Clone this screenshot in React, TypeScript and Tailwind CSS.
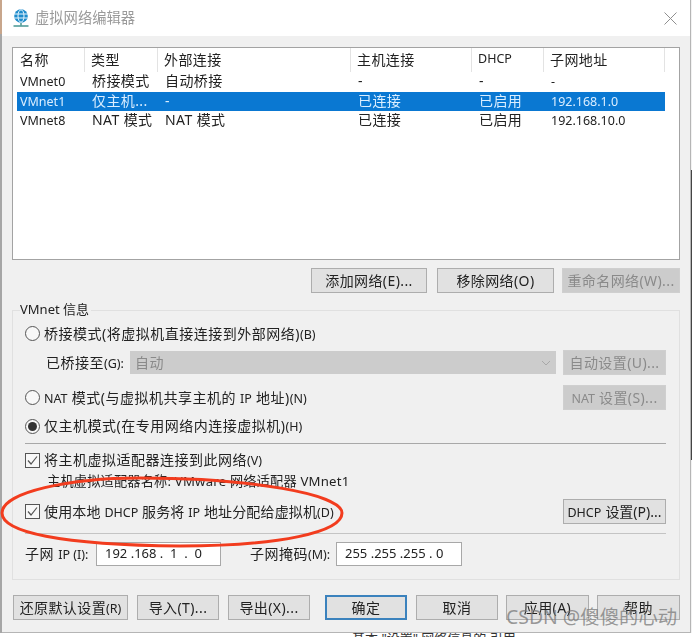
import * as React from "react";

const FONT = "font-['Noto_Sans','Noto_Sans_CJK_SC',sans-serif]";

// 表头和数据行共用的列宽
const GRID = "grid w-[648px] grid-cols-[68px_73px_193px_121px_72px_121px]";

const rows = [
  ["VMnet0", "桥接模式", "自动桥接", "-", "-", "-"],
  ["VMnet1", "仅主机...", "-", "已连接", "已启用", "192.168.1.0"],
  ["VMnet8", "NAT 模式", "NAT 模式", "已连接", "已启用", "192.168.10.0"],
];

const Small = ({ children }: { children: React.ReactNode }) => (
  <span className="text-[12.5px] tracking-normal">{children}</span>
);

const Btn = ({
  children,
  disabled,
  primary,
  className = "",
}: {
  children: React.ReactNode;
  disabled?: boolean;
  primary?: boolean;
  className?: string;
}) => {
  let look = "border border-[#adadad] bg-[#e1e1e1] text-[#222]";
  if (disabled) look = "border border-[#cfcfcf] bg-[#cccccc] text-[#8a8a8a]";
  if (primary) look = "border-2 border-[#3b82bd] bg-[#e1e1e1] text-[#222]";
  return (
    <div
      className={`flex h-[25px] items-center justify-center whitespace-nowrap text-[14px] tracking-[0.4px] ${look} ${className}`}
    >
      <span>{children}</span>
    </div>
  );
};

const Radio = ({ checked }: { checked?: boolean }) => (
  <div className="mr-1 flex h-[15px] w-[15px] shrink-0 items-center justify-center rounded-full border border-[#555] bg-[#f8f8f8]">
    {checked && <div className="h-[9px] w-[9px] rounded-full bg-[#333]" />}
  </div>
);

const Check = () => (
  <div className="mr-1 flex h-[15px] w-[15px] shrink-0 items-center justify-center border border-[#555] bg-[#f8f8f8]">
    <svg width="11" height="11" viewBox="0 0 11 11" fill="none" stroke="#555" strokeWidth="1.2">
      <path d="M1 5.5 L4 9 L10 1.5" />
    </svg>
  </div>
);

const NetIcon = () => (
  <svg width="16" height="18" viewBox="0 0 16 18" fill="none" className="mr-[6px]">
    <circle cx="8" cy="7" r="6.8" fill="#1f8ccb" />
    <ellipse cx="8" cy="7" rx="3" ry="6.2" stroke="#e8f6ff" strokeWidth="1" />
    <path d="M1.4 5H14.6M1.4 9H14.6" stroke="#e8f6ff" strokeWidth="1" />
    <path d="M8 14V16.5" stroke="#3a8f8a" strokeWidth="1.4" />
    <path d="M0.5 17H15.5" stroke="#3a8f8a" strokeWidth="1.4" />
  </svg>
);

const IpField = ({ children, className = "" }: { children: React.ReactNode; className?: string }) => (
  <div
    className={`flex h-[24px] items-center whitespace-pre border border-[#a8a8a8] bg-white pl-2 text-[13px] tracking-normal text-[#222] ${className}`}
  >
    {children}
  </div>
);

const App = () => {
  return (
    <div className={`relative flex h-[637px] w-[692px] flex-col overflow-hidden bg-white ${FONT}`}>
      <div className="flex h-[633px] blur-[0.45px]">
        <div className="flex w-[2px] flex-col">
          <div className="h-[34px] bg-[#c8a68c]" />
          <div className="flex-1 bg-[#a6a6a6]" />
        </div>
        <div className="flex min-w-0 flex-1 flex-col border-b border-[#b5b5b5]">
          {/* 标题栏 */}
          <div className="flex h-[36px] shrink-0 items-center bg-white pl-[11px] pr-[13px]">
            <NetIcon />
            <span className="text-[14.3px] text-[#9a9a9a]">虚拟网络编辑器</span>
            <svg width="13" height="13" viewBox="0 0 13 13" className="ml-auto" stroke="#8f8f8f" strokeWidth="1">
              <path d="M0.5 0.5L12.5 12.5M12.5 0.5L0.5 12.5" />
            </svg>
          </div>

          <div className="flex flex-1 flex-col bg-[#f0f0f0] pl-[10px] pr-[10px] pt-[11px] text-[#222]">
            {/* 网络列表 */}
            <div className="h-[213px] shrink-0 border border-[#a3a3a3] bg-white pl-[4px]">
              <div className={`${GRID} h-[24px] items-center text-[14px] tracking-[0.4px]`}>
                {["名称", "类型", "外部连接", "主机连接", "DHCP", "子网地址"].map((h, i) => (
                  <div
                    key={h}
                    className={`flex h-full items-center border-r border-[#e3e3e3] pb-[2px] ${i === 0 ? "pl-[3px]" : "pl-[6px]"}`}
                  >
                    {h === "DHCP" ? <Small>{h}</Small> : h}
                  </div>
                ))}
              </div>
              {rows.map((r) => (
                <div
                  key={r[0]}
                  className={`${GRID} h-[19.5px] items-start text-[14px] leading-[17px] tracking-[0.4px] ${
                    r[0] === "VMnet1" ? "bg-[#0a78d2] text-[#dbeeff]" : "text-[#222]"
                  }`}
                >
                  {r.map((c, i) => (
                    <div key={i} className={`whitespace-nowrap ${i === 0 ? "pl-[3px]" : "pl-[7px]"}`}>
                      {i === 0 || i === 5 ? <Small>{c}</Small> : c}
                    </div>
                  ))}
                </div>
              ))}
            </div>

            {/* 列表操作 */}
            <div className="mt-[8px] flex shrink-0 justify-end">
              <Btn className="w-[116px]">添加网络(E)...</Btn>
              <Btn className="ml-[10px] w-[117px]">移除网络(O)</Btn>
              <Btn disabled className="ml-[8px] w-[118px]">重命名网络(W)...</Btn>
            </div>

            {/* VMnet 信息 */}
            <div className="relative mt-[17px] flex h-[270px] shrink-0 flex-col border border-[#e0e0e0] pl-[12px] pr-[13px] text-[14px] tracking-[0.5px]">
              <div className="absolute -top-[10px] left-[7px] bg-[#f0f0f0] pr-[2px] text-[13px] leading-[16px] tracking-normal">
                VMnet 信息
              </div>

              <div className="mt-[11px] flex h-[23px] items-center">
                <Radio />
                <span>桥接模式(将虚拟机直接连接到外部网络)<Small>(B)</Small></span>
              </div>

              <div className="mt-[5px] flex h-[25px] items-center pl-[21px]">
                <span className="w-[84px] shrink-0 whitespace-nowrap">已桥接至<Small>(G):</Small></span>
                <div className="flex h-[23px] flex-1 items-center justify-between bg-[#cccccc] pl-[5px] pr-[5px] text-[#8a8a8a]">
                  自动
                  <svg width="10" height="6" viewBox="0 0 10 6" fill="none" stroke="#a8a8a8">
                    <path d="M1 1L5 5L9 1" />
                  </svg>
                </div>
                <Btn disabled className="ml-[7px] w-[103px]">自动设置(U)...</Btn>
              </div>

              <div className="mt-[10px] flex h-[25px] items-center justify-between">
                <div className="flex items-center">
                  <Radio />
                  <span><Small>NAT</Small> 模式(与虚拟机共享主机的 <Small>IP</Small> 地址)<Small>(N)</Small></span>
                </div>
                <Btn disabled className="w-[103px]"><Small>NAT</Small> 设置(S)...</Btn>
              </div>

              <div className="mt-[4px] flex h-[24px] items-center">
                <Radio checked />
                <span>仅主机模式(在专用网络内连接虚拟机)<Small>(H)</Small></span>
              </div>

              <div className="mt-[5px] h-px shrink-0 bg-[#a8a8a8]" />

              <div className="mt-[5px] flex h-[22px] items-center">
                <Check />
                <span>将主机虚拟适配器连接到此网络<Small>(V)</Small></span>
              </div>

              <div className="mt-[2px] flex h-[18px] items-center pl-[22px] text-[13.2px] tracking-[0.2px]">
                主机虚拟适配器名称: VMware 网络适配器 VMnet1
              </div>

              <div className="mt-[8px] flex h-[25px] items-center justify-between">
                <div className="flex items-center">
                  <Check />
                  <span className="tracking-[0.15px]">使用本地 <Small>DHCP</Small> 服务将 <Small>IP</Small> 地址分配给虚拟机<Small>(D)</Small></span>
                </div>
                <Btn className="w-[103px]"><Small>DHCP</Small> <span className="tracking-normal">设置(P)...</span></Btn>
              </div>

              <div className="mt-[9px] h-px shrink-0 bg-[#c4c4c4]" />

              <div className="mt-[8px] flex h-[24px] items-center">
                <span className="w-[71px] shrink-0 whitespace-nowrap">子网 <Small>IP (I):</Small></span>
                <IpField className="w-[125px]">{"192 .168 .  1  .  0"}</IpField>
                <span className="ml-[29px] w-[86px] shrink-0 whitespace-nowrap">子网掩码<Small>(M):</Small></span>
                <IpField className="w-[126px]">{"255 .255 .255 . 0"}</IpField>
              </div>
            </div>

            {/* 底部按钮 */}
            <div className="ml-px mt-[15px] flex shrink-0">
              <Btn className="w-[115px]">还原默认设置<Small>(R)</Small></Btn>
              <Btn className="ml-[9px] w-[82px]">导入(T)...</Btn>
              <Btn className="ml-[9px] w-[82px]">导出(X)...</Btn>
              <Btn primary className="ml-[15px] w-[82px]">确定</Btn>
              <Btn className="ml-[9px] w-[82px]">取消</Btn>
              <Btn className="ml-[8px] w-[83px]">应用(A)</Btn>
              <Btn className="ml-[8px] w-[83px]">帮助</Btn>
            </div>
          </div>
        </div>
        <div className="flex w-[2px] flex-col border-l border-[#b5b5b5]">
          <div className="h-[170px] bg-[#f2f2f2]" />
          <div className="h-[290px] bg-[#444]" />
          <div className="flex-1 bg-[#f2f2f2]" />
        </div>
      </div>

      {/* 窗口下方露出的一点背景文字 */}
      <div className="flex h-[4px] overflow-hidden pl-[352px] text-[13px] leading-[12px] text-[#333]">
        <span className="-mt-[1px] whitespace-nowrap">基本 "设置" 网络信息的 引用</span>
      </div>

      {/* 红色圈注 */}
      <svg className="absolute left-0 top-[470px]" width="350" height="85" viewBox="0 0 350 85" fill="none">
        <path
          d="M140 8 C 70 8, 2 22, 2 43 C 2 62, 60 75, 180 76 C 280 76, 342 62, 342 43 C 342 24, 250 8, 140 8 Z"
          stroke="#f23c1e"
          strokeWidth="3"
        />
      </svg>

      {/* 水印 */}
      <div className="absolute left-[506px] top-[605px] whitespace-nowrap text-[19.4px] leading-[24px] text-[#7a7a7a]/75">
        CSDN @傻傻的心动
      </div>
    </div>
  );
};

export default App;
